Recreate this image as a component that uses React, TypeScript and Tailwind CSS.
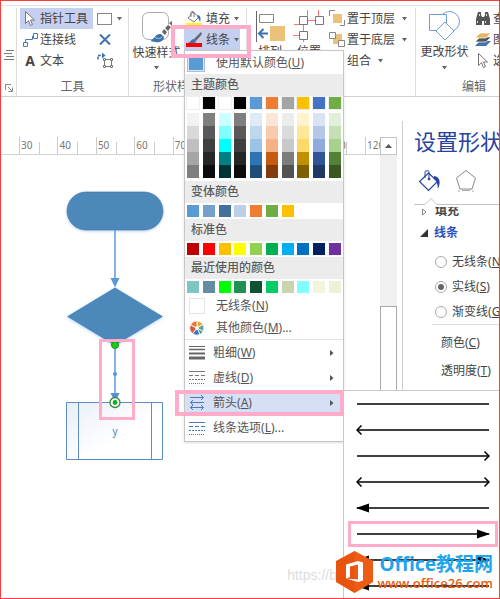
import type { ReactNode } from "react";

const themeColumns = [
  ["bg-white", "bg-[#f2f2f2]", "bg-[#d9d9d9]", "bg-[#bfbfbf]", "bg-[#a6a6a6]", "bg-[#7f7f7f]"],
  ["bg-black", "bg-[#7f7f7f]", "bg-[#595959]", "bg-[#3f3f3f]", "bg-[#262626]", "bg-[#0c0c0c]"],
  ["bg-white", "bg-[#ccffff]", "bg-[#80ffff]", "bg-[#00ffff]", "bg-[#008080]", "bg-[#003333]"],
  ["bg-black", "bg-[#7f7f7f]", "bg-[#595959]", "bg-[#3f3f3f]", "bg-[#262626]", "bg-[#0c0c0c]"],
  ["bg-[#5b9bd5]", "bg-[#deebf7]", "bg-[#bdd7ee]", "bg-[#9dc3e6]", "bg-[#2e75b6]", "bg-[#1f4e79]"],
  ["bg-[#ed7d31]", "bg-[#fbe5d6]", "bg-[#f8cbad]", "bg-[#f4b183]", "bg-[#c55a11]", "bg-[#843c0c]"],
  ["bg-[#a5a5a5]", "bg-[#ededed]", "bg-[#dbdbdb]", "bg-[#c9c9c9]", "bg-[#7c7c7c]", "bg-[#525252]"],
  ["bg-[#ffc000]", "bg-[#fff2cc]", "bg-[#ffe699]", "bg-[#ffd966]", "bg-[#bf9000]", "bg-[#7f6000]"],
  ["bg-[#4472c4]", "bg-[#dae3f3]", "bg-[#b4c7e7]", "bg-[#8faadc]", "bg-[#2f5597]", "bg-[#203864]"],
  ["bg-[#70ad47]", "bg-[#e2f0d9]", "bg-[#c5e0b4]", "bg-[#a9d18e]", "bg-[#548235]", "bg-[#385723]"],
];

const variantColors = ["bg-[#5b9bd5]", "bg-[#779fcd]", "bg-[#41719c]", "bg-[#bccfe8]", "bg-[#ed7d31]", "bg-[#70ad47]", "bg-[#ffc000]"];

const standardColors = ["bg-[#c00000]", "bg-[#ff0000]", "bg-[#ffc000]", "bg-[#ffff00]", "bg-[#92d050]", "bg-[#00b050]", "bg-[#00b0f0]", "bg-[#0070c0]", "bg-[#002060]", "bg-[#7030a0]"];

const recentColors = ["bg-[#7cc7c3]", "bg-[#648ca2]", "bg-[#00ff00]", "bg-[#1c9152]", "bg-[#0f5230]", "bg-[#00cc66]", "bg-[#c9d5b0]", "bg-[#80ffff]", "bg-[#f0f5dc]", "bg-[#ecf2da]"];

const arrows = [
  { left: "none", right: "none", name: "无箭头" },
  { left: "open", right: "none", name: "左箭头" },
  { left: "none", right: "open", name: "右箭头" },
  { left: "open", right: "open", name: "双向箭头" },
  { left: "solid", right: "none", name: "左实心箭头" },
  { left: "none", right: "solid", name: "右实心箭头" },
  { left: "solid", right: "solid", name: "双向实心箭头" },
  { left: "solid", right: "none", name: "左大箭头" },
];

const rulerMarks = [30, 40, 50, 60, 70, 80, 90, 100, 110];

function Caret() {
  return (
    <svg width="5" height="4" viewBox="0 0 5 4" className="shrink-0">
      <path d="M0 0h5L2.500 3.500z" fill="#666" />
    </svg>
  );
}

function Group({ label, className, labelClass, children }: { label: string; className: string; labelClass: string; children?: ReactNode }) {
  return (
    <section className={`flex flex-col ${className}`}>
      <div className="flex h-[69px]">{children}</div>
      <div className={`flex h-[19px] items-center whitespace-nowrap text-[#666] ${labelClass}`}>{label}</div>
    </section>
  );
}

function ToolButton({ icon, label, caret, active }: { icon: ReactNode; label: string; caret?: boolean; active?: boolean }) {
  return (
    <button className={`flex h-[21px] items-center whitespace-nowrap ${active ? "bg-[#c5cff0]" : ""}`}>
      <span className="flex w-5 shrink-0 justify-center">{icon}</span>
      <span>{label}</span>
      {caret && <span className="ml-[7px]"><Caret /></span>}
    </button>
  );
}

function PointerIcon() {
  return (
    <svg width="12" height="17" viewBox="0 0 12 17">
      <path d="M1.500 1.500v12l3-2.800 2 4.800 2-.9-2-4.600h4z" fill="#fff" stroke="#777" />
    </svg>
  );
}

function ConnectorIcon() {
  return (
    <svg width="17" height="16" viewBox="0 0 17 16" fill="none" stroke="#4a7ab5">
      <path d="M11.500 1.500h4v5h-4zM1.500 10.500h4v4h-4zM3.500 10V7.500h7V4" />
    </svg>
  );
}

function CropIcon() {
  return (
    <svg width="17" height="17" viewBox="0 0 17 17" fill="none">
      <path d="M1 7.500V3.500h6" stroke="#3f73ad" strokeWidth="1.500" strokeDasharray="3 1" />
      <path d="m5 .5 3.500 3L5 6.500z" fill="#3f73ad" />
      <path d="M7.500 7.500h7v7h-7z" stroke="#777" />
      <path d="M6.500 6.500h2v2h-2zM13.500 6.500h2v2h-2zM6.500 13.500h2v2h-2zM13.500 13.500h2v2h-2z" fill="#fff" stroke="#777" />
    </svg>
  );
}

function BrushIcon() {
  return (
    <>
      <path d="M13 1 6 8l2 2 6-7z" fill="#666" />
      <path d="M6 8C3 8 3 11 0 12c3 1 8 1 8-2z" fill="#3f73ad" />
    </>
  );
}

function QuickStyleIcon() {
  return (
    <svg width="32" height="32" viewBox="0 0 32 32">
      <rect x="1.500" y="1.500" width="26" height="27" rx="6" fill="#fff" stroke="#aaa" />
      <path d="M31 10 21 21l3 3 7-8z" fill="#fff" />
      <path d="m31 10-3 2 3 3zM27 14l-3 3 3 3 3-4zM23 18l-2 3 3 3 2-3z" fill="#666" />
      <path d="M20 23c-6-1-7 6-11 7 6 2 14 2 14-4z" fill="#3f73ad" />
      <path d="M14 26c2 2 5 2 7 0" stroke="#b5cbe5" fill="none" />
    </svg>
  );
}

function FillIcon() {
  return (
    <svg width="16" height="15" viewBox="0 0 16 15">
      <path d="m7 1 6 5-5 5-6-4z" fill="#fff" stroke="#777" />
      <path d="M5 6V1.500C5 0 8 0 8 2v4" fill="none" stroke="#777" />
      <path d="M12 4c3 1 3 4 2 7-1-2-1-4-3-5z" fill="#3f73ad" />
      <path d="M0 12h16v3H0z" fill="#ff0" />
    </svg>
  );
}

function LineIcon() {
  return (
    <svg width="16" height="15" viewBox="0 0 16 15">
      <g transform="translate(2 -1)"><BrushIcon /></g>
      <path d="M0 11h16v4H0z" fill="red" />
    </svg>
  );
}

function ArrangeIcon() {
  return (
    <svg width="30" height="32" viewBox="0 0 30 32" fill="none">
      <path d="M1.500 1v31" stroke="#666" />
      <path d="M4.500 4.500h14v8h-14z" stroke="#888" />
      <path d="M15 16h15v15H15z" fill="#ecc27a" />
      <path d="M13 23.500H5M8.500 19l-4.500 4.500 4.500 4.500" stroke="#3f73ad" strokeWidth="2" />
    </svg>
  );
}

function PositionIcon() {
  return (
    <svg width="32" height="32" viewBox="0 0 32 32" fill="none">
      <path d="M14.500 0v6M10.500 15v6M10.500 29v3M25.500 0v6M1 14.500h6M0 25.500h6M14 10.500h9" stroke="#ef7b70" />
      <path d="M6.500 6.500h8v8h-8zM22.500 6.500h8v8h-8zM6.500 21.500h8v8h-8z" fill="#fff" stroke="#777" />
    </svg>
  );
}

function ToFrontIcon() {
  return (
    <svg width="17" height="17" viewBox="0 0 17 17" fill="none">
      <path d="M.5 6V.5H6M11 15.500h4.500V10" stroke="#888" />
      <path d="M4 4h9v9H4z" fill="#ecc27a" />
    </svg>
  );
}

function ToBackIcon() {
  return (
    <svg width="17" height="17" viewBox="0 0 17 17">
      <path d="M4 3h9v10H4z" fill="#ecc27a" />
      <path d="M.5 1.500h6v6h-6zM9.500 9.500h6v6h-6z" fill="#fff" stroke="#888" />
    </svg>
  );
}

function GroupIcon() {
  return (
    <svg width="16" height="16" viewBox="0 0 16 16" fill="none">
      <path d="M2.500 2.500h11v11h-11z" stroke="#3f73ad" strokeWidth="2" />
    </svg>
  );
}

function ChangeShapeIcon() {
  return (
    <svg width="34" height="32" viewBox="0 0 34 32" fill="none" stroke="#6f9fd0">
      <circle cx="21.500" cy="11.500" r="10" />
      <path d="M1.500 4.500h17v16h-17z" fill="#fff" />
      <path d="m17 12 9 9-9 9-9-9z" fill="#fff" />
    </svg>
  );
}

function FindIcon() {
  return (
    <svg width="16" height="15" viewBox="0 0 16 15" fill="#555">
      <path d="M3 1h3v3l1 2v8H1V8zM10 1h3l2 7v6H9V6l1-2zM7 6h2v4H7z" />
      <path d="M2.500 10v2M10.500 10v2M4.500 3v2M11.500 3v2" stroke="#ddd" />
    </svg>
  );
}

function LayersIcon() {
  return (
    <svg width="16" height="15" viewBox="0 0 16 15">
      <path d="m5 9 11 0-5 5H0z" fill="#3f73ad" />
      <path d="m5 5 11 0-5 5H0z" fill="#555" stroke="#fff" strokeWidth=".7" />
      <path d="m5 1 11 0-5 5H0z" fill="#e7b667" stroke="#fff" strokeWidth=".7" />
    </svg>
  );
}

function Swatches({ colors }: { colors: string[] }) {
  return (
    <div className="flex justify-between px-[2px] py-[2px]">
      {standardColors.map((_, i) =>
        colors[i] ? <button key={i} aria-label="颜色" className={`size-3 ${colors[i]}`} /> : <span key={i} className="size-3" />
      )}
    </div>
  );
}

function MenuHeading({ children }: { children: ReactNode }) {
  return <h3 className="flex h-[22px] items-center bg-[#ececec] pl-[6px] font-medium text-[#5c5c5c]">{children}</h3>;
}

function MenuItem({ icon, label, hotkey, tail, sub, className }: { icon: ReactNode; label: string; hotkey: string; tail?: string; sub?: boolean; className: string }) {
  return (
    <button className={`flex w-full items-center whitespace-nowrap pl-1 ${className}`}>
      <span className="flex w-4 shrink-0 justify-center">{icon}</span>
      <span className="flex-1 text-left">{label}(<u>{hotkey}</u>){tail}</span>
      {sub && (
        <svg width="4" height="6" viewBox="0 0 4 6" className="mr-[9px]">
          <path d="M0 0v6l3.500-3z" fill="#555" />
        </svg>
      )}
    </button>
  );
}

function ColorWheelIcon() {
  return (
    <svg width="16" height="16" viewBox="0 0 16 16" stroke="#fff" strokeWidth=".8">
      <path d="M8 8V1a7 7 0 0 1 6 3.500z" fill="#e8a33c" />
      <path d="m8 8 6-3.500a7 7 0 0 1 0 7z" fill="#5da594" />
      <path d="m8 8 6 3.500A7 7 0 0 1 11 14.500z" fill="#4a9a8c" />
      <path d="M8 8l3 6.500a7 7 0 0 1-7.500-1z" fill="#3c79bd" />
      <path d="M8 8l-4.500 5.500A7 7 0 0 1 1.500 5z" fill="#d65a3c" />
      <path d="M8 8 1.500 5A7 7 0 0 1 8 1z" fill="#e57b3d" />
      <circle cx="8" cy="8" r="1.500" fill="#fff" />
    </svg>
  );
}

function WeightIcon() {
  return (
    <svg width="16" height="15" viewBox="0 0 16 15" stroke="#666">
      <path d="M0 1.500h16" />
      <path d="M0 4.500h16" strokeWidth="1.500" />
      <path d="M0 8.500h16" strokeWidth="2" />
      <path d="M0 13h16" strokeWidth="3" />
    </svg>
  );
}

function DashIcon({ color }: { color: string }) {
  return (
    <svg width="16" height="15" viewBox="0 0 16 15" stroke={color}>
      <path d="M0 1.500h16" />
      <path d="M0 5.500h16" strokeDasharray="4 2" />
      <path d="M0 9.500h16" strokeDasharray="2 1" />
      <path d="M0 13.500h16" strokeDasharray="1 1" />
    </svg>
  );
}

function ArrowsIcon() {
  return (
    <svg width="16" height="15" viewBox="0 0 16 15" fill="none" stroke="#4a7ab5">
      <path d="M1 2.500h13M12 0l2.500 2.500L12 5M15 7.500H2M4 5 1.500 7.500 4 10M1 12.500h13M12 10l2.500 2.500L12 15M4 10l-2.500 2.500L4 15" />
    </svg>
  );
}

function ArrowLine({ left, right }: { left: string; right: string }) {
  return (
    <svg width="134" height="12" viewBox="0 0 134 12" fill="none" stroke="#000">
      <path d="M1 6h132" strokeWidth="1.500" />
      {left === "open" && <path d="M5.500 1.500 1 6l4.500 4.500" strokeWidth="1.500" />}
      {right === "open" && <path d="M128.500 1.500 133 6l-4.500 4.500" strokeWidth="1.500" />}
      {left === "solid" && <path d="M0 6l13-4.500v9z" fill="#000" stroke="none" />}
      {right === "solid" && <path d="M134 6l-13-4.500v9z" fill="#000" stroke="none" />}
    </svg>
  );
}

function ArrowMenu() {
  return (
    <div className="absolute left-full top-0 w-[159px] border-l border-t border-[#c8c8c8] bg-white">
      {arrows.map((arrow, i) => (
        <button key={i} aria-label={arrow.name} className="relative flex h-[26px] w-full items-center justify-center">
          <ArrowLine left={arrow.left} right={arrow.right} />
          {i === 5 && <span className="absolute inset-x-1 inset-y-0 border-3 border-[#ffabc9]" />}
        </button>
      ))}
    </div>
  );
}

function LineMenu() {
  return (
    <div className="absolute left-0 top-full z-20 w-[160px] border border-[#c6c6c6] bg-white text-[#555] shadow-sm">
      <button className="flex h-[23px] w-full items-center gap-[11px] whitespace-nowrap pl-[2px]">
        <span className="flex size-[18px] items-center justify-center border border-[#a9bce6] bg-[#dde6f7]">
          <span className="size-[14px] bg-[#5b9bd5]" />
        </span>
        <span>使用默认颜色(<u>U</u>)</span>
      </button>
      <MenuHeading>主题颜色</MenuHeading>
      <div className="flex justify-between px-[2px] pb-[3px] pt-px">
        {themeColumns.map(([base, ...tints], i) => (
          <div key={i} className="flex flex-col">
            <button aria-label="主题颜色" className={`mb-1 size-3 outline outline-[#eee] ${base}`} />
            {tints.map((tint) => (
              <button key={tint} aria-label="主题颜色" className={`h-[13px] w-3 ${tint}`} />
            ))}
          </div>
        ))}
      </div>
      <MenuHeading>变体颜色</MenuHeading>
      <Swatches colors={variantColors} />
      <MenuHeading>标准色</MenuHeading>
      <Swatches colors={standardColors} />
      <MenuHeading>最近使用的颜色</MenuHeading>
      <Swatches colors={recentColors} />
      <MenuItem className="h-[22px] gap-[11px]" icon={<span className="size-4 border border-[#e4e4e4]" />} label="无线条" hotkey="N" />
      <MenuItem className="h-[22px] gap-[11px]" icon={<ColorWheelIcon />} label="其他颜色" hotkey="M" tail="..." />
      <div className="border-t border-[#e2e2e2]">
        <MenuItem className="h-[25px] gap-2" icon={<WeightIcon />} label="粗细" hotkey="W" sub />
        <MenuItem className="h-[25px] gap-2" icon={<DashIcon color="#777" />} label="虚线" hotkey="D" sub />
        <div className="relative">
          <MenuItem className="h-[25px] gap-2 bg-[#d5dff5]" icon={<ArrowsIcon />} label="箭头" hotkey="A" sub />
          <ArrowMenu />
          <span className="absolute -left-[10px] -right-px top-0 h-[26px] border-4 border-[#ffabc9]" />
        </div>
        <MenuItem className="h-[26px] gap-2" icon={<DashIcon color="#4a7ab5" />} label="线条选项" hotkey="L" tail="..." />
      </div>
    </div>
  );
}

function Ribbon() {
  return (
    <header className="mt-1 flex border-b border-t border-b-[#d0d0d0] border-t-[#e4e4e4] pt-[2px]">
      <div className="flex w-4 flex-col items-center justify-end gap-6 border-r border-[#ddd] pb-1">
        <svg width="10" height="10" viewBox="0 0 10 10" stroke="#777">
          <path d="M2 .5h8M0 3.500h8M2 6.500h8M0 9.500h10" />
        </svg>
        <svg width="8" height="8" viewBox="0 0 8 8" fill="none" stroke="#888">
          <path d="M.5 6V.5H6M3 3l4 4M7.500 3.500v4h-4" />
        </svg>
      </div>

      <Group label="工具" className="w-[112px] border-r border-[#ddd]" labelClass="justify-center">
        <div className="flex w-[76px] flex-col pl-[3px]">
          <ToolButton icon={<PointerIcon />} label="指针工具" active />
          <ToolButton icon={<ConnectorIcon />} label="连接线" />
          <ToolButton icon={<b className="font-['Open_Sans'] text-sm">A</b>} label="文本" />
        </div>
        <div className="flex flex-col pl-1">
          <button aria-label="矩形" className="flex h-[21px] items-center gap-[5px]">
            <span className="h-3 w-[15px] border border-[#888]" />
            <Caret />
          </button>
          <button aria-label="连接点" className="flex h-[21px] items-center pl-[2px]">
            <svg width="12" height="11" viewBox="0 0 12 11"><path d="m1 .5 10 10M11 .5l-10 10" stroke="#3f73ad" strokeWidth="2" /></svg>
          </button>
          <button aria-label="文本块" className="flex h-[21px] items-center"><CropIcon /></button>
        </div>
      </Group>

      <Group label="形状样式" className="w-[118px] border-r border-[#ddd]" labelClass="pl-6">
        <button className="flex w-[55px] flex-col items-center whitespace-nowrap pt-[3px]">
          <QuickStyleIcon />
          <span className="leading-[19px]">快速样式</span>
          <span className="mt-1"><Caret /></span>
        </button>
        <div className="flex flex-col">
          <button className="flex h-[21px] items-center gap-1 whitespace-nowrap pl-[2px]">
            <FillIcon />填充<Caret />
          </button>
          <div className="relative">
            <button className="flex h-[21px] w-14 items-center gap-1 whitespace-nowrap bg-[#c5cff0] pl-[2px]">
              <LineIcon />线条<Caret />
            </button>
            <LineMenu />
            <span className="absolute -left-[13px] -top-1 z-30 h-[33px] w-20 border-4 border-[#ffabc9]" />
          </div>
        </div>
      </Group>

      <Group label="排列" className="w-[169px] border-r border-[#ddd]" labelClass="justify-center">
        <button className="flex w-[42px] flex-col items-center pl-1 pt-[2px]">
          <ArrangeIcon />
          <span className="leading-[19px]">排列</span>
        </button>
        <button className="flex w-[38px] flex-col items-center pl-[2px] pt-[2px]">
          <PositionIcon />
          <span className="leading-[19px]">位置</span>
        </button>
        <div className="flex flex-col items-start">
          <ToolButton icon={<ToFrontIcon />} label="置于顶层" caret />
          <ToolButton icon={<ToBackIcon />} label="置于底层" caret />
          <ToolButton icon={<GroupIcon />} label="组合" caret />
        </div>
      </Group>

      <Group label="编辑" className="min-w-0 flex-1 overflow-hidden" labelClass="pl-[46px]">
        <button className="flex w-[57px] shrink-0 flex-col items-center whitespace-nowrap pt-[2px]">
          <ChangeShapeIcon />
          <span className="leading-[19px]">更改形状</span>
          <span className="mt-[5px]"><Caret /></span>
        </button>
        <div className="flex flex-col items-start">
          <ToolButton icon={<FindIcon />} label="查找" />
          <ToolButton icon={<LayersIcon />} label="图层" />
          <ToolButton icon={<PointerIcon />} label="选择" />
        </div>
      </Group>
    </header>
  );
}

function Ruler() {
  return (
    <div className="flex h-[18px] overflow-hidden border-b border-[#d4d4d4] pl-[18px] text-[10px] text-[#777]">
      {rulerMarks.map((mark) => (
        <div key={mark} className="flex flex-1 items-end border-l border-[#ccc]">
          <span className="w-1/2 self-center pl-px">{mark}</span>
          <span className="h-3 w-1/2 border-l border-[#ccc]" />
        </div>
      ))}
      <div className="flex w-[15px] items-center overflow-hidden border-l border-[#ccc] pl-px">120</div>
    </div>
  );
}

function Flowchart() {
  return (
    <svg width="180" height="320" viewBox="1 155 180 320" fill="none">
      <defs>
        <linearGradient id="box" x1="0" y1="0" x2="1" y2="1">
          <stop offset="0" stopColor="#e9eef7" />
          <stop offset=".6" stopColor="#fff" />
        </linearGradient>
        <filter id="glow" x="-10%" y="-10%" width="120%" height="130%">
          <feDropShadow dx="0" dy="1" stdDeviation="1.500" floodColor="#6fa5e0" floodOpacity=".5" />
        </filter>
      </defs>
      <rect x="67" y="192" width="96" height="38" rx="19" fill="#4e88bb" stroke="#41719c" strokeWidth=".6" filter="url(#glow)" />
      <path d="m115 287.500 48 29-48 29-48-29z" fill="#4e88bb" filter="url(#glow)" />
      <path d="M115 230v50" stroke="#6a9fe0" strokeWidth="1.600" />
      <path d="M110.500 278h9l-4.500 9.500z" fill="#5b9bd5" />
      <path d="M66.500 402.500h96v57h-96z" fill="url(#box)" stroke="#5b8fc4" />
      <path d="M78.500 402v57M151.500 402v57" stroke="#5b8fc4" />
      <path d="M115 346v50" stroke="#6a9fe0" strokeWidth="1.600" />
      <path d="M110.500 393h9l-4.500 9z" fill="#5b8fd5" />
      <circle cx="115" cy="374" r="2" fill="#5b8fe0" />
      <circle cx="115" cy="345" r="3.500" fill="#12d012" stroke="#1b8a1b" />
      <circle cx="115" cy="402.500" r="5" fill="#fff" stroke="#2f8a3a" strokeWidth="1.300" />
      <circle cx="115" cy="402.500" r="2.400" fill="#10b020" />
      <text x="115" y="435" textAnchor="middle" fontSize="10" fill="#4a86bd">y</text>
      <rect x="100.500" y="340.500" width="33" height="78" stroke="#ffabc9" strokeWidth="3" />
    </svg>
  );
}

function FormatPanel() {
  return (
    <aside className="mt-6 w-[97px] overflow-hidden border-l border-[#ccc] text-[#444]">
      <h2 className="flex h-[42px] items-center whitespace-nowrap pl-[11px] text-[22px] text-[#2643a0]">设置形状格式</h2>
      <div className="flex h-[35px] items-center gap-[13px] pl-[15px]">
        <button aria-label="填充与线条">
          <svg width="24" height="24" viewBox="0 0 24 24" fill="none" stroke="#2643a0">
            <path d="m10.500 4 9 8.500-9 9-9-9z" strokeWidth="1.200" />
            <path d="M7 9V2.500c0-1 4-1 4 0V9" />
            <circle cx="11" cy="10" r="1" fill="#2643a0" />
            <path d="M16 7c6 1 7 6 4 13-.5-5-1-8-4-10z" fill="#2643a0" stroke="none" />
          </svg>
        </button>
        <button aria-label="效果">
          <svg width="22" height="24" viewBox="0 0 22 24" fill="none" stroke="#888">
            <path d="m11 1.500 9.500 7.500-3.500 11H5L1.500 9z" />
            <path d="M4 21v2M18 21v2M7 21.500h8" stroke="#aaa" />
          </svg>
        </button>
      </div>
      <svg width="97" height="9" viewBox="0 0 97 9" fill="none" stroke="#c4c4c4">
        <path d="M11 6.500h11l6-6 6 6h63" />
      </svg>
      <div className="flex h-[10px] items-end gap-2 overflow-hidden pl-[19px]">
        <svg width="5" height="8" viewBox="0 0 5 8" fill="none" stroke="#888"><path d="M.5 0v6L4 3z" /></svg>
        <b className="leading-3">填充</b>
      </div>
      <div className="flex h-8 items-center gap-[6px] pl-[17px]">
        <svg width="8" height="8" viewBox="0 0 8 8"><path d="M8 0v8H0z" fill="#333" /></svg>
        <b className="text-[#2c50bd]">线条</b>
      </div>
      <div className="flex flex-col whitespace-nowrap pl-8">
        {[["无线条", "N"], ["实线", "S"], ["渐变线", "G"]].map(([label, key]) => (
          <label key={key} className="flex h-[25px] items-center gap-[5px]">
            <input
              type="radio"
              name="line"
              defaultChecked={key === "S"}
              className="size-3 shrink-0 appearance-none rounded-full border border-[#aaa] bg-white bg-clip-content p-[2px] checked:bg-[#666]"
            />
            <span>{label}(<u>{key}</u>)</span>
          </label>
        ))}
      </div>
      <div className="ml-[29px] flex flex-col whitespace-nowrap border-t border-[#ddd] pl-[9px] pt-1">
        <div className="flex h-7 items-center">颜色(<u>C</u>)</div>
        <div className="flex h-7 items-center">透明度(<u>T</u>)</div>
      </div>
    </aside>
  );
}

function Watermark() {
  return (
    <div className="absolute bottom-[5px] right-[6px] z-40 flex items-center gap-1">
      <span className="absolute bottom-2 right-[156px] font-['Liberation_Sans',sans-serif] text-sm leading-5 text-[#ddd]">https://b</span>
      <svg width="37" height="42" viewBox="0 0 37 42" className="relative">
        <path d="M18.500 0 37 10v21L18.500 42 0 31V10z" fill="#e8540f" />
        <path d="M18.500 0 37 10v21L18.500 42z" fill="#f0641a" opacity=".5" />
        <path d="M10 13.500 22 10l5 1.500v18L22 31l-12-3.500L22 28.500V13.500l-8 2v10.500l-4 1.500z" fill="#fff" />
      </svg>
      <div className="flex flex-col whitespace-nowrap">
        <span className="pl-[2px] text-[19px] font-bold leading-[22px] text-[#1fa5ee]">Office教程网</span>
        <a href="#" className="font-['Open_Sans','Noto_Sans',sans-serif] text-[13px] font-semibold leading-[16px] text-[#ea5b0c]">www.office26.com</a>
      </div>
    </div>
  );
}

export default function App() {
  return (
    <main className="relative flex h-screen flex-col overflow-hidden border border-[#ff3b3b] bg-white font-['Noto_Sans','Noto_Sans_CJK_SC',sans-serif] text-xs text-[#444]">
      <Ribbon />
      <div className="flex min-h-0 flex-1">
        <div className="flex min-w-0 flex-1 pr-[5px] pt-10">
          <div className="min-w-0 flex-1">
            <Ruler />
            <Flowchart />
          </div>
          <div className="flex w-[17px] flex-col">
            <button aria-label="向上滚动" className="flex h-[18px] items-center justify-center border border-[#c4c4c4]">
              <svg width="7" height="4" viewBox="0 0 7 4"><path d="M0 4h7L3.500 0z" fill="#555" /></svg>
            </button>
            <div className="h-[151px] bg-[#f0f0f0]" />
            <div className="flex-1 border border-[#aaa] bg-white" />
          </div>
        </div>
        <FormatPanel />
      </div>
      <Watermark />
    </main>
  );
}
